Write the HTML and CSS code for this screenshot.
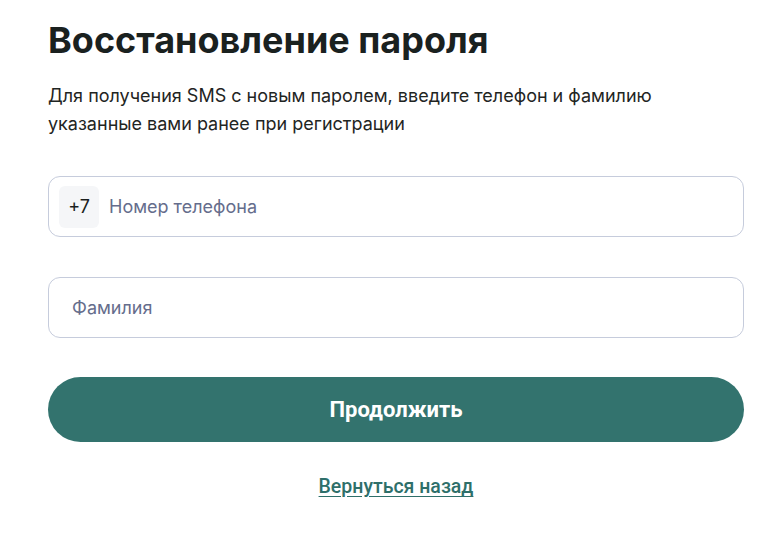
FILE: index.html
```html
<!DOCTYPE html>
<html lang="ru">
<head>
<meta charset="utf-8">
<title>Восстановление пароля</title>
<link rel="stylesheet" href="styles.css">
</head>
<body>
<main class="page">
  <h1 class="title">Восстановление пароля</h1>
  <p class="lead">Для получения SMS с новым паролем, введите телефон и фамилию указанные вами ранее при регистрации</p>
  <form class="form">
    <label class="field field-phone">
      <span class="prefix">+7</span>
      <input class="input" type="text" placeholder="Номер телефона">
    </label>
    <label class="field">
      <input class="input input-plain" type="text" placeholder="Фамилия">
    </label>
    <button class="submit" type="button">Продолжить</button>
    <a class="back" href="#">Вернуться назад</a>
  </form>
</main>
</body>
</html>
```
FILE: styles.css
```css
* { box-sizing: border-box; }
html, body { margin: 0; padding: 0; background: #fff; }
body { font-family: Inter, "Noto Sans", sans-serif; color: #1c2220; }
.page { width: 696px; margin-left: 48px; padding-top: 18px; }
.title { margin: 0; font-size: 36px; line-height: 44px; font-weight: 700; color: #1a211f; letter-spacing: 0; }
.lead { margin: 20px 0 0; font-size: 18px; line-height: 28px; color: #1f2523; width: 620px; }
.form { display: flex; flex-direction: column; margin-top: 38px; }
.field { display: flex; align-items: center; height: 61px; border: 1px solid #c6ccdc; border-radius: 12px; padding: 0 10px; margin-bottom: 40px; }
.field-phone { padding-left: 10px; }
.prefix { display: flex; align-items: center; justify-content: center; width: 40px; height: 42px; background: #f5f6f8; border-radius: 6px; font-size: 18px; color: #1b1f1e; margin-right: 10px; }
.input { border: 0; outline: 0; flex: 1; font-family: Inter, "Noto Sans", sans-serif; font-size: 18px; color: #1b1f1e; background: transparent; padding: 0; }
.input::placeholder { color: #656d8c; }
.input-plain { padding-left: 13px; }
.submit { height: 65px; border: 0; border-radius: 33px; background: #33736e; color: #fff; font-family: Roboto, "Liberation Sans", sans-serif; font-weight: 700; font-size: 22px; margin-top: -1px; cursor: pointer; }
.back { align-self: center; margin-top: 33px; font-family: Roboto, "Liberation Sans", sans-serif; font-weight: 500; font-size: 19.5px; color: #2e6f6a; text-decoration: underline; text-underline-offset: 3px; }
```
